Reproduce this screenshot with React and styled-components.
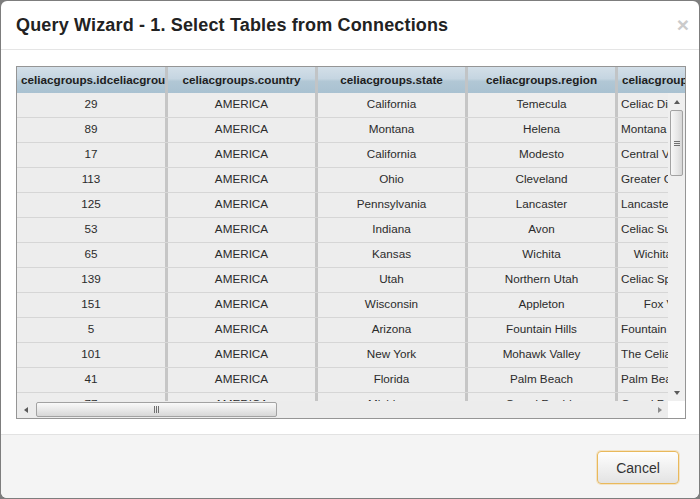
import React from "react";
import styled, { createGlobalStyle } from "styled-components";

const Global = createGlobalStyle`
  html, body { margin: 0; padding: 0; background: #7d7d7d; }
  body { font-family: Arial, "Liberation Sans", Helvetica, sans-serif; }
  #root { padding: 1px 0 0 1px; }
`;

const Modal = styled.div`
  width: 698px;
  height: 497px;
  background: #fff;
  border-radius: 6px;
  overflow: hidden;
  display: flex;
  flex-direction: column;
`;

const Header = styled.div`
  display: flex;
  align-items: center;
  justify-content: space-between;
  padding: 14px 10px 14px 15px;
  border-bottom: 1px solid #e5e5e5;
`;

const Title = styled.h4`
  margin: 0;
  font-family: Arial, "Liberation Sans", sans-serif;
  font-size: 18px;
  line-height: 20px;
  font-weight: 700;
  letter-spacing: 0.16px;
  color: #222;
`;

const Close = styled.span`
  font-size: 21px;
  font-weight: 700;
  line-height: 20px;
  color: #cbcbcb;
`;

const Body = styled.div`
  padding: 16px 0 15px 15px;
`;

const Frame = styled.div`
  width: 668px;
  border: 1px solid #959595;
  background: #f0f0f0;
  display: flex;
  flex-direction: column;
`;

const HeadClip = styled.div`
  height: 26px;
  overflow: hidden;
  display: flex;
  background: linear-gradient(#d3dfe8, #c5d5e1 45%, #b1c7d5 55%, #a9c1d1);
`;

const HeadCell = styled.div`
  flex: 0 0 ${(p) => p.$w}px;
  box-sizing: border-box;
  height: 26px;
  line-height: 26px;
  padding: 0 4px;
  text-align: center;
  white-space: nowrap;
  overflow: hidden;
  font-size: 11.7px;
  font-weight: 700;
  color: #1d1d1d;
  border-right: 3px solid #c1c4c6;
`;

const BodyArea = styled.div`
  display: flex;
  height: 308px;
`;

const RowsClip = styled.div`
  flex: 1;
  overflow: hidden;
  background: #ededed;
`;

const Row = styled.div`
  display: flex;
  height: 25px;
  border-bottom: 1px solid #d6d6d6;
  box-sizing: border-box;
`;

const Cell = styled.div`
  flex: 0 0 ${(p) => p.$w}px;
  box-sizing: border-box;
  line-height: 22px;
  padding: 0 3px;
  text-align: center;
  white-space: nowrap;
  overflow: hidden;
  font-size: 11.7px;
  color: #2b2b2b;
  border-right: 3px solid #c6c6c6;
`;

const VScroll = styled.div`
  flex: 0 0 17px;
  background: #efefef;
  display: flex;
  flex-direction: column;
  align-items: center;
`;

const ArrowBtn = styled.div`
  flex: 0 0 17px;
  width: 17px;
  display: flex;
  align-items: center;
  justify-content: center;
`;

const Tri = styled.div`
  width: 0;
  height: 0;
  border-style: solid;
  ${(p) =>
    p.$dir === "up"
      ? "border-width: 0 3.5px 4px 3.5px; border-color: transparent transparent #5a5a5a transparent;"
      : p.$dir === "down"
      ? "border-width: 4px 3.5px 0 3.5px; border-color: #5a5a5a transparent transparent transparent;"
      : p.$dir === "left"
      ? "border-width: 3.5px 4px 3.5px 0; border-color: transparent #5a5a5a transparent transparent;"
      : "border-width: 3.5px 0 3.5px 4px; border-color: transparent transparent transparent #8a8a8a;"}
`;

const VThumb = styled.div`
  width: 13px;
  height: 66px;
  box-sizing: border-box;
  border: 1px solid #a2a2a2;
  border-radius: 2px;
  background: linear-gradient(90deg, #f7f7f7, #e6e6e6 60%, #d6d6d6);
  display: flex;
  align-items: center;
  justify-content: center;
`;

const Track = styled.div`
  flex: 1;
`;

const Grip = styled.div`
  display: flex;
  flex-direction: ${(p) => (p.$vertical ? "column" : "row")};
  gap: 1px;
  & > span {
    display: block;
    background: #707070;
    ${(p) => (p.$vertical ? "width: 6px; height: 1px;" : "width: 1px; height: 7px;")}
  }
`;

const HScrollRow = styled.div`
  display: flex;
  height: 17px;
`;

const HScroll = styled.div`
  flex: 1;
  display: flex;
  align-items: center;
  background: #ececec;
`;

const HThumb = styled.div`
  margin-left: 2px;
  width: 241px;
  height: 15px;
  box-sizing: border-box;
  border: 1px solid #a2a2a2;
  border-radius: 2px;
  background: linear-gradient(#f9f9f9, #e9e9e9 50%, #d7d7d7);
  display: flex;
  align-items: center;
  justify-content: center;
`;

const Corner = styled.div`
  flex: 0 0 17px;
  background: #fff;
`;

const Footer = styled.div`
  flex: 1;
  background: #f4f4f4;
  border-top: 1px solid #e2e2e2;
  display: flex;
  justify-content: flex-end;
  align-items: flex-start;
  padding: 16px 20px 0 0;
`;

const Button = styled.button`
  width: 82px;
  height: 33px;
  font-family: Arial, "Liberation Sans", sans-serif;
  font-size: 14px;
  color: #333;
  background: linear-gradient(#fefefe, #e3e3e3);
  border: 1px solid #e9b95c;
  border-radius: 4px;
  box-shadow: 0 0 0 1px rgba(240, 195, 110, 0.35);
  padding: 0;
`;

const widths = [151, 150, 150, 150, 150];
const headers = [
  "celiacgroups.idceliacgroups",
  "celiacgroups.country",
  "celiacgroups.state",
  "celiacgroups.region",
  "celiacgroups.groupname",
];

const rows = [
  ["29", "AMERICA", "California", "Temecula", "Celiac Disease Foundation of Temecula"],
  ["89", "AMERICA", "Montana", "Helena", "Montana Celiac Society Support Group"],
  ["17", "AMERICA", "California", "Modesto", "Central Valley Celiac Support Group"],
  ["113", "AMERICA", "Ohio", "Cleveland", "Greater Cleveland Celiac Support Group"],
  ["125", "AMERICA", "Pennsylvania", "Lancaster", "Lancaster Area Celiac Support Group"],
  ["53", "AMERICA", "Indiana", "Avon", "Celiac Support Group of Central Indiana"],
  ["65", "AMERICA", "Kansas", "Wichita", "Wichita Celiac Society"],
  ["139", "AMERICA", "Utah", "Northern Utah", "Celiac Sprue Association of Northern Utah"],
  ["151", "AMERICA", "Wisconsin", "Appleton", "Fox Valley Celiacs"],
  ["5", "AMERICA", "Arizona", "Fountain Hills", "Fountain Hills Celiac Support Group"],
  ["101", "AMERICA", "New York", "Mohawk Valley", "The Celiac Support Group of Mohawk Valley"],
  ["41", "AMERICA", "Florida", "Palm Beach", "Palm Beach County Celiac Support Group"],
  ["77", "AMERICA", "Michigan", "Grand Rapids", "Grand Rapids Area Celiac Support Group"],
];

export default function App() {
  return (
    <>
      <Global />
      <Modal>
        <Header>
          <Title>Query Wizard - 1. Select Tables from Connections</Title>
          <Close>×</Close>
        </Header>
        <Body>
          <Frame>
            <HeadClip>
              {headers.map((h, i) => (
                <HeadCell key={h} $w={widths[i]}>
                  {h}
                </HeadCell>
              ))}
            </HeadClip>
            <BodyArea>
              <RowsClip>
                {rows.map((r) => (
                  <Row key={r[0]}>
                    {r.map((v, i) => (
                      <Cell key={i} $w={widths[i]}>
                        {v}
                      </Cell>
                    ))}
                  </Row>
                ))}
              </RowsClip>
              <VScroll>
                <ArrowBtn>
                  <Tri $dir="up" />
                </ArrowBtn>
                <VThumb>
                  <Grip $vertical>
                    <span />
                    <span />
                    <span />
                  </Grip>
                </VThumb>
                <Track />
                <ArrowBtn>
                  <Tri $dir="down" />
                </ArrowBtn>
              </VScroll>
            </BodyArea>
            <HScrollRow>
              <HScroll>
                <ArrowBtn>
                  <Tri $dir="left" />
                </ArrowBtn>
                <HThumb>
                  <Grip>
                    <span />
                    <span />
                    <span />
                  </Grip>
                </HThumb>
                <Track />
                <ArrowBtn>
                  <Tri $dir="right" />
                </ArrowBtn>
              </HScroll>
              <Corner />
            </HScrollRow>
          </Frame>
        </Body>
        <Footer>
          <Button>Cancel</Button>
        </Footer>
      </Modal>
    </>
  );
}
